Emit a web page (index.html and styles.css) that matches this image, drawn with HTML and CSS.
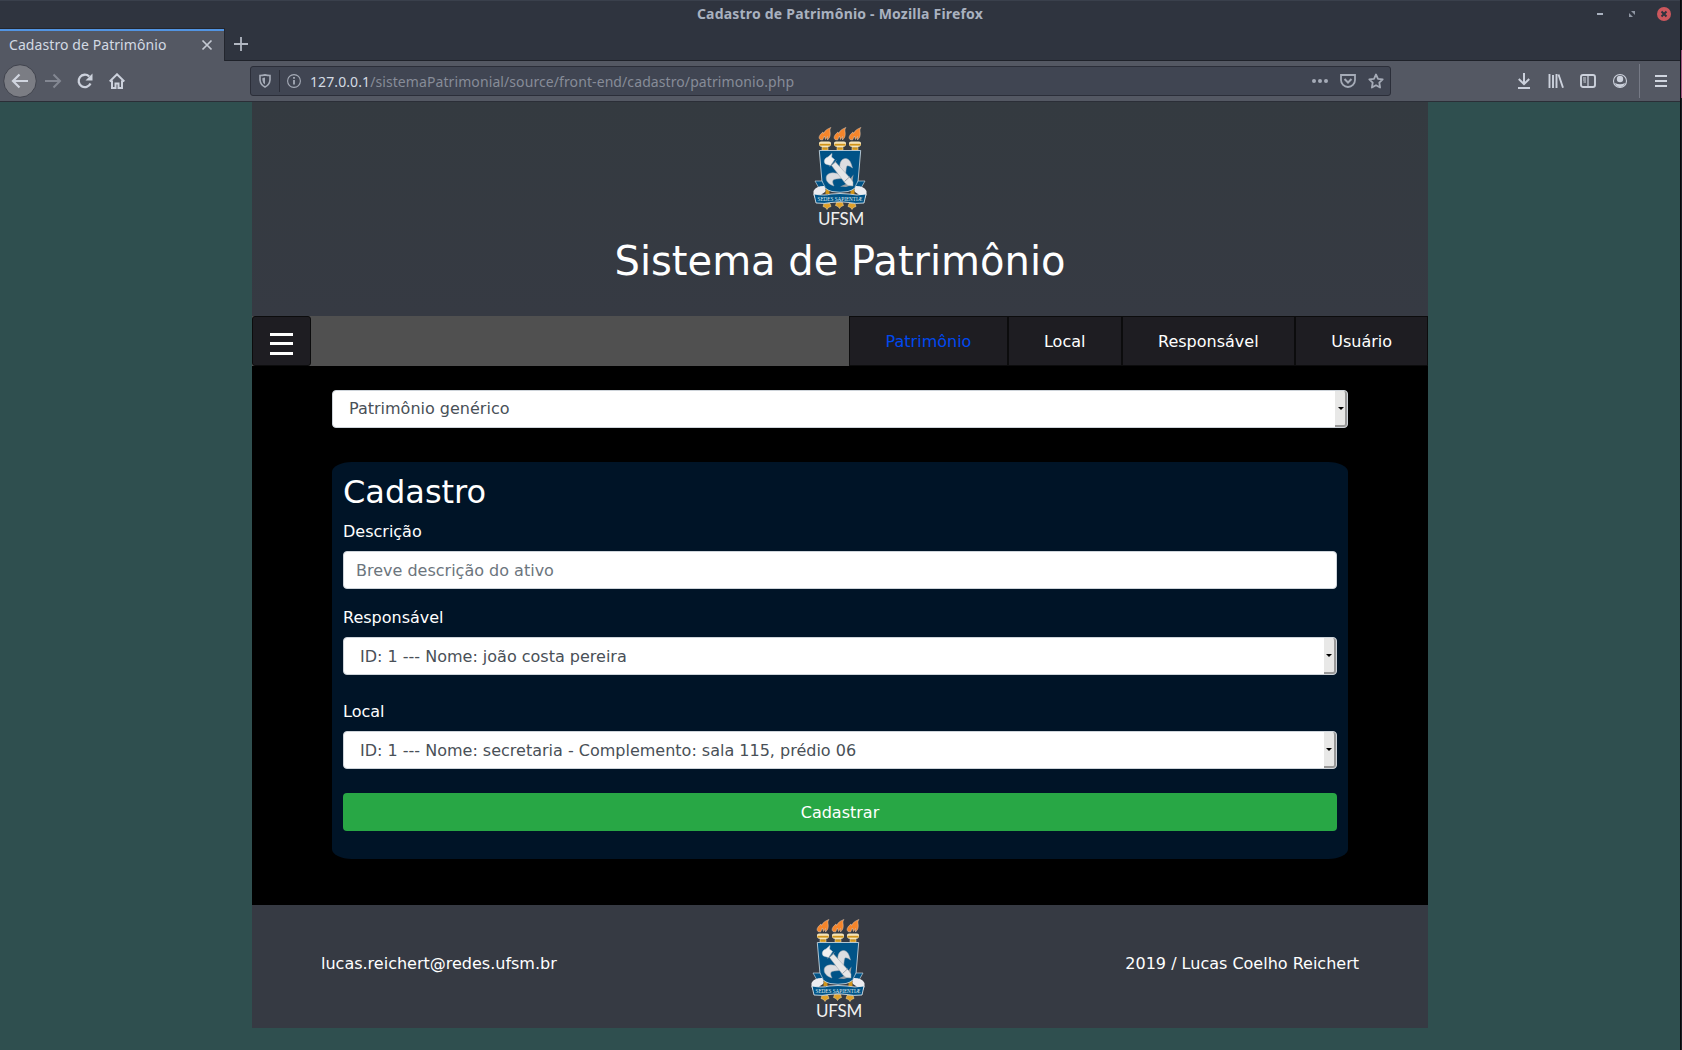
FILE: index.html
```html
<!DOCTYPE html>
<html lang="pt-BR">
<head>
<meta charset="utf-8">
<title>Cadastro de Patrimônio</title>
<link rel="stylesheet" href="styles.css">
</head>
<body>
<svg class="defs" aria-hidden="true">
  <symbol id="crest" viewBox="0 0 54 99">
    <g id="torch">
      <path d="M7 12.500C4.500 10 8 6.500 10 5L10.500 6.500C12 3.500 14 2 18 .5C15.500 3 18.500 6 16.500 10.500L14.500 13L14.500 9.500L12.500 12.500L11.500 9L9.500 13Z" fill="#f5852b" stroke="#e9cdb5" stroke-width=".5"/>
      <path d="M6 16q0-1.500 2-1.500h8q2 0 2 1.500v2q-1 2-3 2h-6q-2 0-3-2z" fill="#f4e3b8"/>
      <path d="M6.500 17.700h11" stroke="#d0941a" stroke-width="1.800"/>
      <path d="M9 20.200h6v3h-6z" fill="#d0941a" stroke="#fff0c8" stroke-width=".5"/>
    </g>
    <use href="#torch" x="15"/>
    <use href="#torch" x="30"/>
    <path d="M12.500 61h4v6h-4zM37.500 61h4v6h-4z" fill="#d0941a"/>
    <path d="M6.300 23.500H47.700L45 55Q44 62 35 64.500Q27 66 19 64.500Q10 62 9 55Z" fill="#005387" stroke="#c3d3dc" stroke-width=".9"/>
    <path d="M27 42C26 35 29 31.500 32.500 31.500C37 32 38 36 39.500 41C36 38.500 34 38 33.500 40C33 42 33 44 32.500 47Z" fill="#dcdde0" stroke="#a5adb3" stroke-width=".5"/>
    <path d="M27.500 48C22 45 16 45 13.500 49C12 54 16 57.500 21 59C19.500 56 19 53.500 21 52.500C24 51.500 27 52 30 51Z" fill="#dcdde0" stroke="#a5adb3" stroke-width=".5"/>
    <path d="M39 58L40.500 47.500L37 52L33 57L27 59.500L33 60Z" fill="#969da3"/>
    <path d="M18.500 38.500l4-3.500L38 52l2 3v4l-5-.5L32 56Z" fill="#e7e7e7" stroke="#9aa5ad" stroke-width=".5"/>
    <path d="M12.500 37C10 34 12 31 15 30L19 26.500L18.500 30L21.500 32.500L17.500 38.500Z" fill="#f0f0f0" stroke="#cfd6da" stroke-width=".5"/>
    <path d="M16.500 39.500l7-6M31.500 54.500l5.500-5" stroke="#8d979f" stroke-width=".8"/>
    <path d="M2 54h7l3 6-6 1zM52 54h-7l-3 6 6 1z" fill="#005387" stroke="#c3d3dc" stroke-width=".7"/>
    <path d="M.5 64Q3 59 11 59Q15 64 9 67L3 72Q0 70 .5 64ZM53.500 64Q51 59 43 59Q39 64 45 67L51 72Q54 70 53.500 64Z" fill="#ececf0"/>
    <path id="drop" d="M14 82.500l-1.500-2-2.500-1 1-3h6l1 3-2.500 1z" fill="#dfa02a" stroke="#ffe5a5" stroke-width=".5"/>
    <use href="#drop" x="12.500" y="-1"/>
    <use href="#drop" x="25"/>
    <path d="M1 67Q12 69 18 67Q27 66 36 67Q43 69 53 67L51 76Q42 77 36 75.500Q27 74 18 75.500Q12 77 3 76Z" fill="#005387" stroke="#edf2f5" stroke-width=".8"/>
  </symbol>
</svg>

<div class="window">
  <div class="titlebar">
    <span class="window-title">Cadastro de Patrimônio - Mozilla Firefox</span>
    <div class="window-buttons">
      <svg width="14" height="14" viewBox="0 0 14 14"><path d="M4 7h6" stroke="#a9b1bf" stroke-width="2"/></svg>
      <svg width="14" height="14" viewBox="0 0 14 14"><path d="M6 4h4v4zM4 6v4h4z" fill="#8f96a3"/></svg>
      <svg width="14" height="14" viewBox="0 0 14 14"><circle cx="7" cy="7" r="7" fill="#cc575d"/><path d="M4.500 4.500l5 5m0-5l-5 5" stroke="#2f343f" stroke-width="2"/></svg>
    </div>
  </div>
  <div class="tabbar">
    <div class="tab"><span class="tab-title">Cadastro de Patrimônio</span>
      <svg width="12" height="12" viewBox="0 0 12 12"><path d="M1.500 1.500l9 9m0-9l-9 9" stroke="#c4c9d3" stroke-width="1.700"/></svg>
    </div>
    <svg class="new-tab" width="14" height="14" viewBox="0 0 14 14"><path d="M0 7h14M7 0v14" stroke="#b2b7c2" stroke-width="1.800"/></svg>
  </div>
  <div class="toolbar">
    <div class="nav-buttons">
      <svg width="34" height="34" viewBox="0 0 34 34"><circle cx="17" cy="17" r="16.300" fill="#7b7d84" stroke="#40434d"/><path d="M25 17H10m6.500-6.500L10 17l6.500 6.500" fill="none" stroke="#d0d5df" stroke-width="2.200"/></svg>
      <svg width="18" height="16" viewBox="0 0 18 16"><path d="M1 8h15M9.500 1.500L16 8l-6.500 6.500" fill="none" stroke="#838792" stroke-width="2"/></svg>
      <svg width="16" height="16" viewBox="0 0 16 16"><path d="M13.500 10.500A6.200 6.200 0 1 1 12.200 3.500" fill="none" stroke="#ccd1dc" stroke-width="2.300"/><path d="M15.500 .5v7h-7z" fill="#ccd1dc"/></svg>
      <svg width="16" height="16" viewBox="0 0 16 16"><path d="M.7 8.500L8 1.300l7.300 7.200M3 7.500V15h3.500v-4.500h3V15H13V7.500" fill="none" stroke="#ccd1dc" stroke-width="2"/></svg>
    </div>
    <div class="urlbar">
      <svg class="shield" width="12" height="14" viewBox="0 0 12 14"><path d="M1 1.500Q3.500 1.500 6 .9Q8.500 1.500 11 1.500V6Q10.500 11 6 13Q1.500 11 1 6Z" fill="none" stroke="#a5abb7" stroke-width="1.600"/><path d="M6 3.500v7Q3.600 9 3.400 6V4z" fill="#a5abb7"/></svg>
      <span class="url-sep"></span>
      <svg class="info" width="14" height="14" viewBox="0 0 14 14"><circle cx="7" cy="7" r="6.400" fill="none" stroke="#a5abb7" stroke-width="1.100"/><path d="M7 6v4.500M7 3v1.700" stroke="#a5abb7" stroke-width="1.800"/></svg>
      <span class="url"><span class="host">127.0.0.1</span><span class="path">/sistemaPatrimonial/source/front-end/cadastro/patrimonio.php</span></span>
      <div class="url-actions">
        <svg width="16" height="16" viewBox="0 0 16 16"><circle cx="2" cy="8" r="2"/><circle cx="8" cy="8" r="2"/><circle cx="14" cy="8" r="2"/></svg>
        <svg width="16" height="16" viewBox="0 0 16 16"><path d="M1 2h14v5a7 7 0 0 1-14 0z" fill="none" stroke="#a5abb7" stroke-width="1.800"/><path d="M4.500 6L8 9.500 11.500 6" fill="none" stroke="#a5abb7" stroke-width="2"/></svg>
        <svg width="16" height="16" viewBox="0 0 16 16"><path d="M8 1.500l2 4.300 4.700.6-3.400 3.300.8 4.800L8 12.200l-4.100 2.300.8-4.800L1.300 6.400 6 5.800z" fill="none" stroke="#a5abb7" stroke-width="1.800" stroke-linejoin="round"/></svg>
      </div>
    </div>
    <div class="tools">
      <svg width="16" height="16" viewBox="0 0 16 16"><path d="M8 0v11M2.800 6L8 11.200 13.200 6M2 15h12" fill="none" stroke="#ccd1dc" stroke-width="2"/></svg>
      <svg width="16" height="16" viewBox="0 0 16 16"><path d="M1.500 1v14M5 2v13M8.500 1v14M10.500 1.500L15 14.700" fill="none" stroke="#ccd1dc" stroke-width="1.900"/></svg>
      <svg width="16" height="16" viewBox="0 0 16 16"><rect x="1" y="2" width="14" height="12" rx="2" fill="none" stroke="#ccd1dc" stroke-width="1.900"/><path d="M8 2v12M3 5h3M3 7h3M3.500 9H6" stroke="#ccd1dc" stroke-width="1.200"/></svg>
      <svg width="16" height="16" viewBox="0 0 16 16"><circle cx="8" cy="8" r="6.500" fill="none" stroke="#ccd1dc" stroke-width="1.100"/><circle cx="8" cy="6" r="3.200" fill="#ccd1dc"/><path d="M3 10q5 2.600 10 0q-1 4-5 4t-5-4z" fill="#ccd1dc"/></svg>
    </div>
    <span class="tool-sep"></span>
    <svg class="menu" width="12" height="12" viewBox="0 0 12 12"><path d="M0 1h12M0 6h12M0 11h12" stroke="#d0d5df" stroke-width="2"/></svg>
  </div>

  <div class="viewport">
    <div class="page">
      <header class="header">
        <svg class="crest" width="54" height="99" viewBox="0 0 54 99">
          <use href="#crest" width="54" height="99"/>
          <text x="4.500" y="73.500" class="crest-motto">SEDES SAPIENTIÆ</text>
          <text x="5" y="98" class="crest-name">UFSM</text>
        </svg>
        <h1>Sistema de Patrimônio</h1>
      </header>
      <nav class="nav">
        <button class="nav-toggle" aria-label="Menu"><span></span><span></span><span></span></button>
        <div class="nav-links">
          <a class="active">Patrimônio</a><a>Local</a><a>Responsável</a><a>Usuário</a>
        </div>
      </nav>
      <main class="main">
        <div class="select"><span>Patrimônio genérico</span><i class="arrow"></i></div>
        <form class="form">
          <h2>Cadastro</h2>
          <label>Descrição</label>
          <input class="input" type="text" placeholder="Breve descrição do ativo">
          <label>Responsável</label>
          <div class="select field"><span>ID: 1 --- Nome: joão costa pereira</span><i class="arrow"></i></div>
          <label>Local</label>
          <div class="select field"><span>ID: 1 --- Nome: secretaria - Complemento: sala 115, prédio 06</span><i class="arrow"></i></div>
          <button class="submit" type="button">Cadastrar</button>
        </form>
      </main>
      <footer class="footer">
        <span class="mail">lucas.reichert@redes.ufsm.br</span>
        <svg class="crest" width="54" height="99" viewBox="0 0 54 99">
          <use href="#crest" width="54" height="99"/>
          <text x="4.500" y="73.500" class="crest-motto">SEDES SAPIENTIÆ</text>
          <text x="5" y="97.500" class="crest-name">UFSM</text>
        </svg>
        <span class="credit">2019 / Lucas Coelho Reichert</span>
      </footer>
    </div>
  </div>
</div>
</body>
</html>
```
FILE: styles.css
```css
* { box-sizing: border-box; }
body {
  margin: 0;
  /* sliver of the desktop beside the window */
  background: linear-gradient(#15171c 50px, #9c5580 50px, #9c5580 98px, #1d2027 98px);
  font: 16px/24px "DejaVu Sans", sans-serif;
  overflow: hidden;
}
svg { display: block; flex: none; }
.defs { position: absolute; width: 0; height: 0; }
.crest { overflow: visible; }
.crest-motto { font: 5.200px "Liberation Serif", serif; fill: #dfe9ef; }
.crest-name { font: 400 17px Lato, sans-serif; letter-spacing: -.2px; fill: #f0f0f0; }

.window {
  width: 1681px;
  height: 1050px;
  display: flex;
  flex-direction: column;
  border-right: 1px solid #08090b;
}

.titlebar {
  height: 28px;
  padding-bottom: 1px;
  display: grid;
  grid-template-columns: 1fr auto 1fr;
  align-items: center;
  background: #2f343f;
  border-top: 1px solid #3a404c;
  color: #a9b1bf;
  font: bold 14px/20px "Noto Sans", sans-serif;
  letter-spacing: .2px;
}
.window-title { grid-column: 2; }
.window-buttons { display: flex; gap: 18px; justify-content: flex-end; padding-right: 9px; }

.tabbar {
  height: 33px;
  display: flex;
  background: #2f343f;
  border-bottom: 1px solid #1f222a;
}
.tab {
  width: 225px;
  height: 33px;
  padding: 0 11px 0 9px;
  display: flex;
  align-items: center;
  justify-content: space-between;
  background: #545863;
  border-top: 1px solid #23262e;
  border-right: 1px solid #23262e;
  box-shadow: inset 0 2px #5294e2;
  color: #d3dae3;
  font: 14px/20px "Noto Sans", sans-serif;
  letter-spacing: .08px;
}
.tab-title { padding-bottom: 1px; }
.new-tab { margin: 9px 0 0 9px; }

.toolbar {
  height: 41px;
  display: flex;
  align-items: center;
  background: #545863;
  border-bottom: 1px solid #2b2e37;
}
.nav-buttons { width: 250px; padding-left: 3px; display: flex; align-items: center; }
.nav-buttons svg:nth-child(2) { margin-left: 7px; }
.nav-buttons svg:nth-child(3) { margin-left: 15px; }
.nav-buttons svg:nth-child(4) { margin-left: 16px; }
.urlbar {
  width: 1141px;
  height: 30px;
  padding: 0 6px 0 8px;
  display: flex;
  align-items: center;
  background: #404552;
  border: 1px solid #2b2e39;
  border-radius: 3px;
  font: 14px/20px "Noto Sans", sans-serif;
  letter-spacing: .09px;
}
.url-sep { width: 1px; height: 22px; margin: 0 7px 0 8px; background: #2b2e39; }
.url { margin-left: 9px; padding-top: 1px; }
.host { color: #d3dae3; }
.path { color: #878c98; }
.url-actions { margin-left: auto; display: flex; gap: 12px; fill: #a5abb7; }
.tools { margin-left: 125px; display: flex; gap: 16px; }
.tool-sep { width: 1px; height: 34px; margin-left: 11px; background: #767a86; }
.menu { margin-left: 15px; }

.viewport { flex: 1; background: #2f4f4f; }
.page { width: 1176px; margin: 0 auto; color: #fff; }
.header {
  height: 214px;
  padding-top: 25px;
  display: flex;
  flex-direction: column;
  align-items: center;
  background: linear-gradient(#343a40, #363a43);
}
h1 { margin: 11px 0 0; font-size: 40px; font-weight: 400; line-height: 48px; }

.nav { height: 50px; display: flex; justify-content: space-between; background: #505050; }
.nav-toggle {
  width: 59px;
  height: 50px;
  padding: 5px 0 0;
  display: flex;
  flex-direction: column;
  align-items: center;
  justify-content: center;
  gap: 6.500px;
  background: #1e1d22;
  border: 1px solid #0c0c0d;
  border-radius: 3px;
}
.nav-toggle span { width: 23px; height: 3px; background: #fff; }
.nav-links { display: flex; }
.nav-links a {
  padding: 13px 35px 11px;
  background: #1e1d22;
  border: 1px solid #0c0c0d;
}
.nav-links a:not(:last-child) { padding-right: 35.600px; }
.nav-links .active { padding-left: 36px; color: #0049f0; }

.main { height: 539px; padding: 24px 80px 0; background: #000; }
.select, .input {
  width: 100%;
  height: 38px;
  display: flex;
  background: #fff;
  border: 1px solid #ced4da;
  border-radius: 4px;
  color: #495057;
  font: 16px/24px "DejaVu Sans", sans-serif;
}
.select { padding: 6px 0 0 16px; position: relative; }
.arrow {
  position: absolute;
  top: 0;
  right: 0;
  width: 12px;
  height: 36px;
  background: #e8e8e7;
  border-right: 2px solid #999;
  border-bottom: 2px solid #999;
  border-radius: 0 3px 3px 0;
}
.arrow::after {
  content: "";
  position: absolute;
  left: 3px;
  top: 16px;
  border: 3px solid transparent;
  border-top-color: #000;
  border-bottom: 0;
}
.form {
  height: 397px;
  margin-top: 34px;
  padding: 11px;
  background: #001427;
  border-radius: 20px / 10px;
}
h2 { margin: 0 0 8px; font-size: 32px; font-weight: 400; line-height: 38px; }
label { display: block; height: 32px; padding-top: 1px; }
.input { padding: 6px 12px; margin-bottom: 16px; }
.input::placeholder { color: #6c757d; opacity: 1; }
.field { margin-bottom: 24px; padding-top: 7px; }
.field .arrow::after { left: 2px; }
.submit {
  width: 100%;
  height: 38px;
  padding: 2px 0 0;
  background: #28a745;
  border: 0;
  border-radius: 4px;
  color: #fff;
  font: 16px/24px "DejaVu Sans", sans-serif;
}

.footer {
  height: 123px;
  padding: 0 69px;
  display: grid;
  grid-template-columns: 490px 54px 1fr;
  background: #363a43;
}
.footer .crest { margin-top: 14px; }
.mail, .credit { padding-top: 47px; }
.credit { text-align: right; }
```
